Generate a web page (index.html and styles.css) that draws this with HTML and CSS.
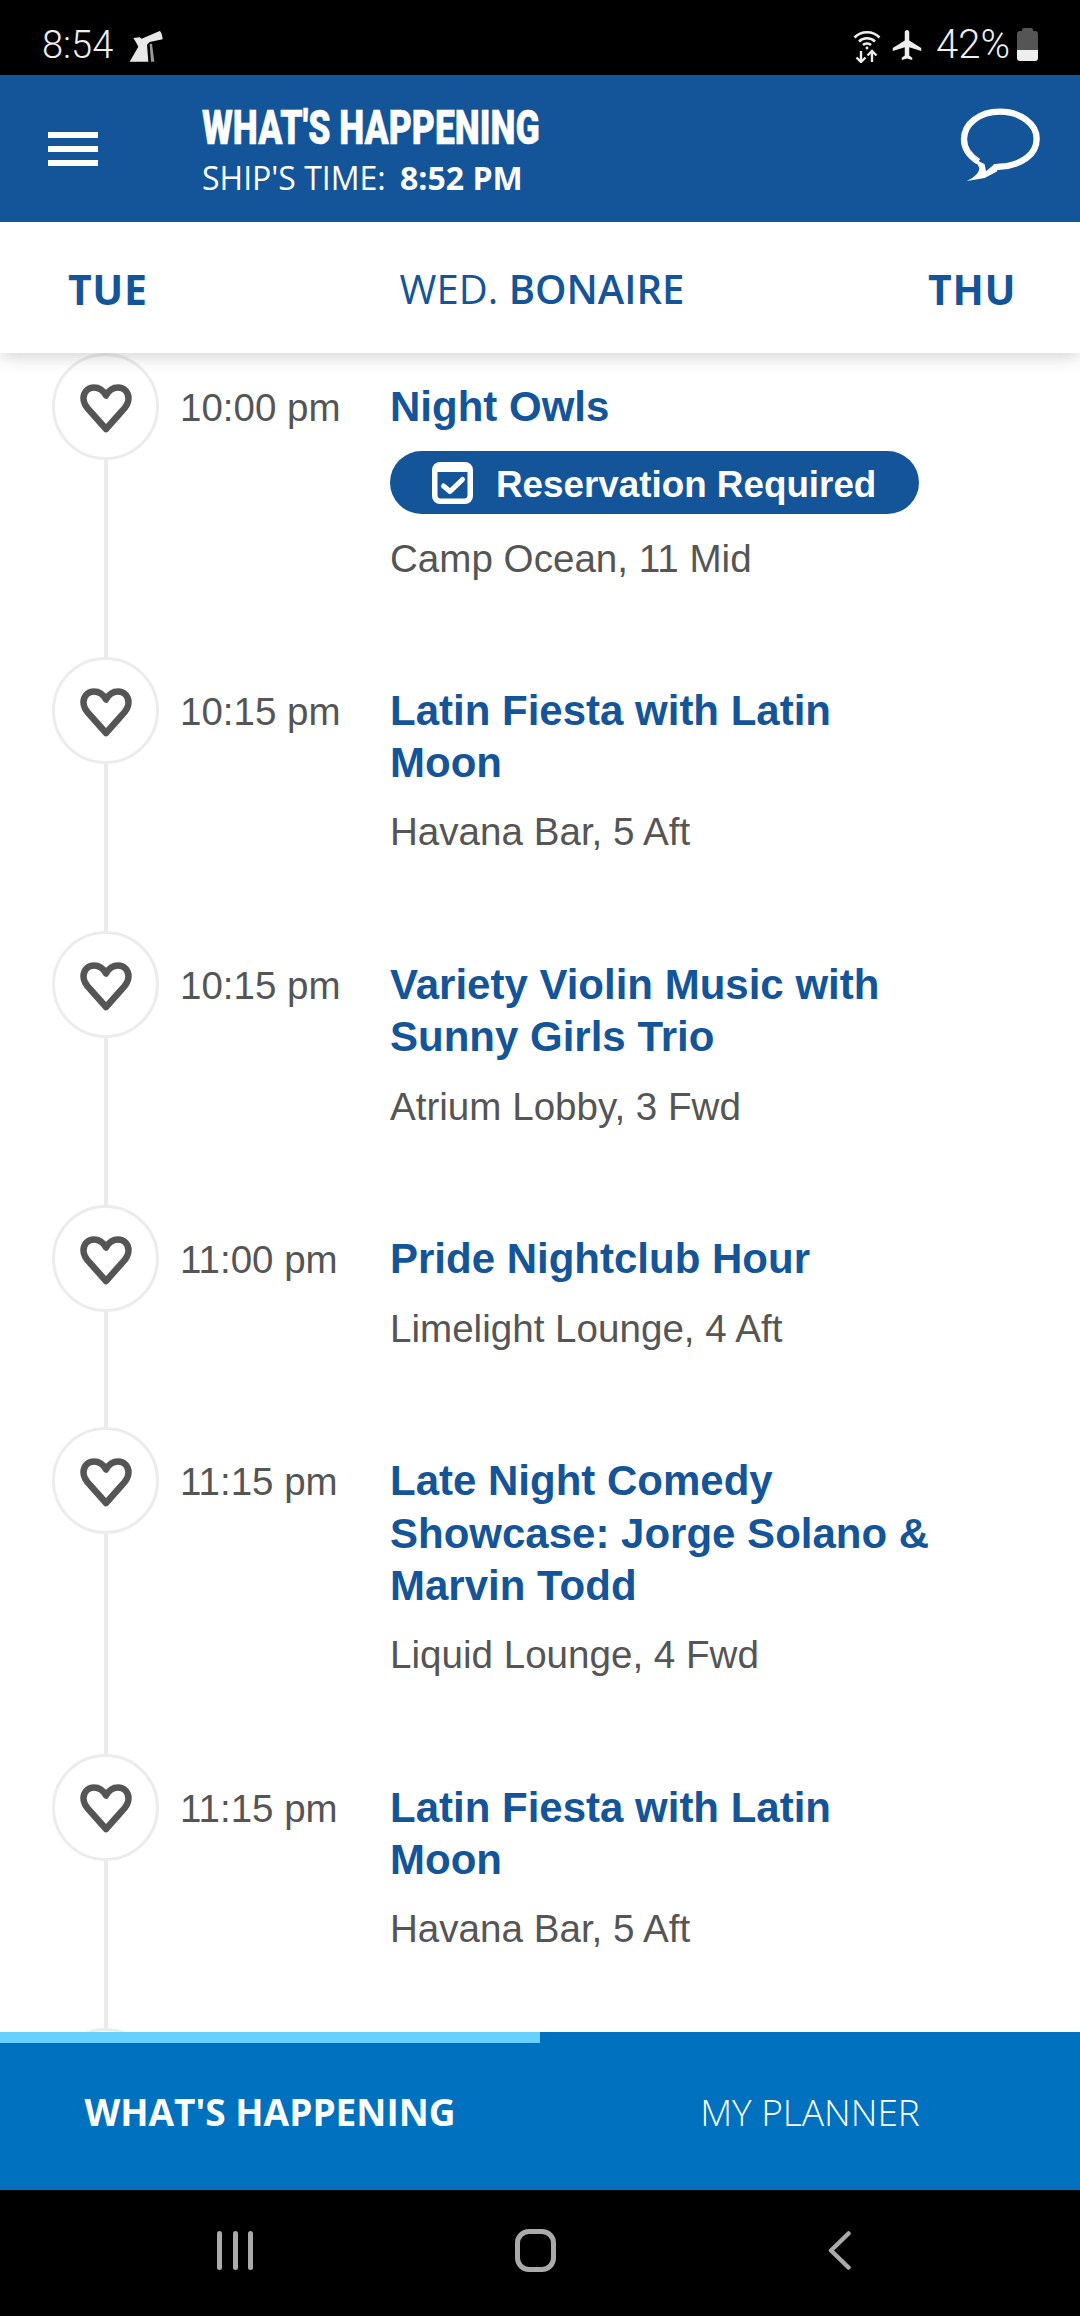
FILE: index.html
```html
<!DOCTYPE html>
<html lang="en">
<head>
<meta charset="utf-8">
<title>What's Happening</title>
<link rel="stylesheet" href="styles.css">
</head>
<body>
<div class="app">
  <div class="status">
    <div class="status-left">
      <span class="clock">8:54</span>
      <svg class="logo" viewBox="0 0 150 150"><path fill="#e8e8e8" d="M43 54L62 52L68 56L122 33Q128 34 131 58L92 66L84 74L88 125L32 125L58 80Q52 68 43 54Z"/><path fill="#9a9a9a" d="M92 72L99 71L106 125L96 125Z"/></svg>
    </div>
    <div class="status-right">
      <svg class="wifi" viewBox="0 0 28 34" fill="none" stroke="#eee" stroke-width="2.6"><path d="M1.5 8.5C8 1.5 20 1.5 26.5 8.5"/><path d="M6 12.5C10 8.2 18 8.2 22 12.5"/><path d="M10 16C12 14 16 14 18 16"/><circle cx="14" cy="19" r="1.4" fill="#eee" stroke="none"/><path d="M8 22V33M3.5 28.5L8 33L12.5 28.5M19 33V22M14.5 26.500L19 22L23.500 26.500" stroke-width="2.400"/></svg>
      <svg class="plane" viewBox="2 2 19 20"><path fill="#eee" d="M21 16v-2l-8-5V3.500c0-.83-.67-1.500-1.500-1.500S10 2.670 10 3.500V9l-8 5v2l8-2.500V19l-2 1.500V22l3.500-1 3.500 1v-1.500L13 19v-5.500l8 2.500z"/></svg>
      <span class="pct">42%</span>
      <div class="battery"><div class="battery-cap"></div><div class="battery-used"></div><div class="battery-left"></div></div>
    </div>
  </div>

  <header class="topbar">
    <div class="burger"><span></span><span></span><span></span></div>
    <div class="heading">
      <div class="heading-title">WHAT'S HAPPENING</div>
      <div class="heading-sub">SHIP'S TIME: <b>8:52 PM</b></div>
    </div>
    <svg class="chat" viewBox="0 0 300 300"><path fill="none" stroke="#fff" stroke-width="19" d="M85 197C58 180 42 155 42 130C42 82 90 47 150 47C212 47 260 85 260 128C260 175 215 208 150 212L132 214"/><path fill="#fff" d="M74 188L104 205L108 226L134 204L142 226L104 246L50 255C70 246 88 232 88 216Z"/></svg>
  </header>

  <nav class="days">
    <span class="day">TUE</span>
    <span class="day-current">WED. <b>BONAIRE</b></span>
    <span class="day day-next">THU</span>
  </nav>

  <main class="list">
    <article class="row">
      <div class="rail"><div class="fav"><svg class="heart" viewBox="0 0 52 49"><path d="M26 11.500C23 6 18 3.500 14 3.500C8 3.500 3.500 8 3.500 14.500C3.500 20 7 24 10 27L26 45L42 27C45 24 48.500 20 48.500 14.500C48.500 8 44 3.500 38 3.500C34 3.500 29 6 26 11.500Z"/></svg></div><div class="rail-line"></div></div>
      <div class="time">10:00 pm</div>
      <div class="info info-reserved">
        <h2 class="title">Night Owls</h2>
        <div class="pill">
          <svg class="check" viewBox="0 0 41 42"><path fill="#fff" fill-rule="evenodd" d="M8 0H33A8 8 0 0 1 41 8V34A8 8 0 0 1 33 42H8A8 8 0 0 1 0 34V8A8 8 0 0 1 8 0ZM5.500 10V33A3.500 3.500 0 0 0 9 36.500H32A3.500 3.500 0 0 0 35.500 33V10Z"/><path fill="none" stroke="#fff" stroke-width="5" stroke-linecap="round" stroke-linejoin="round" d="M11.500 24L18 29.500L30.500 17.500"/></svg>
          <span>Reservation Required</span>
        </div>
        <p class="venue">Camp Ocean, 11 Mid</p>
      </div>
    </article>

    <article class="row">
      <div class="rail"><div class="fav"><svg class="heart" viewBox="0 0 52 49"><path d="M26 11.500C23 6 18 3.500 14 3.500C8 3.500 3.500 8 3.500 14.500C3.500 20 7 24 10 27L26 45L42 27C45 24 48.500 20 48.500 14.500C48.500 8 44 3.500 38 3.500C34 3.500 29 6 26 11.500Z"/></svg></div><div class="rail-line"></div></div>
      <div class="time">10:15 pm</div>
      <div class="info">
        <h2 class="title">Latin Fiesta with Latin Moon</h2>
        <p class="venue">Havana Bar, 5 Aft</p>
      </div>
    </article>

    <article class="row">
      <div class="rail"><div class="fav"><svg class="heart" viewBox="0 0 52 49"><path d="M26 11.500C23 6 18 3.500 14 3.500C8 3.500 3.500 8 3.500 14.500C3.500 20 7 24 10 27L26 45L42 27C45 24 48.500 20 48.500 14.500C48.500 8 44 3.500 38 3.500C34 3.500 29 6 26 11.500Z"/></svg></div><div class="rail-line"></div></div>
      <div class="time">10:15 pm</div>
      <div class="info">
        <h2 class="title">Variety Violin Music with Sunny Girls Trio</h2>
        <p class="venue">Atrium Lobby, 3 Fwd</p>
      </div>
    </article>

    <article class="row">
      <div class="rail"><div class="fav"><svg class="heart" viewBox="0 0 52 49"><path d="M26 11.500C23 6 18 3.500 14 3.500C8 3.500 3.500 8 3.500 14.500C3.500 20 7 24 10 27L26 45L42 27C45 24 48.500 20 48.500 14.500C48.500 8 44 3.500 38 3.500C34 3.500 29 6 26 11.500Z"/></svg></div><div class="rail-line"></div></div>
      <div class="time">11:00 pm</div>
      <div class="info">
        <h2 class="title">Pride Nightclub Hour</h2>
        <p class="venue">Limelight Lounge, 4 Aft</p>
      </div>
    </article>

    <article class="row">
      <div class="rail"><div class="fav"><svg class="heart" viewBox="0 0 52 49"><path d="M26 11.500C23 6 18 3.500 14 3.500C8 3.500 3.500 8 3.500 14.500C3.500 20 7 24 10 27L26 45L42 27C45 24 48.500 20 48.500 14.500C48.500 8 44 3.500 38 3.500C34 3.500 29 6 26 11.500Z"/></svg></div><div class="rail-line"></div></div>
      <div class="time">11:15 pm</div>
      <div class="info">
        <h2 class="title">Late Night Comedy Showcase: Jorge Solano &amp; Marvin Todd</h2>
        <p class="venue">Liquid Lounge, 4 Fwd</p>
      </div>
    </article>

    <article class="row">
      <div class="rail"><div class="fav"><svg class="heart" viewBox="0 0 52 49"><path d="M26 11.500C23 6 18 3.500 14 3.500C8 3.500 3.500 8 3.500 14.500C3.500 20 7 24 10 27L26 45L42 27C45 24 48.500 20 48.500 14.500C48.500 8 44 3.500 38 3.500C34 3.500 29 6 26 11.500Z"/></svg></div><div class="rail-line"></div></div>
      <div class="time">11:15 pm</div>
      <div class="info">
        <h2 class="title">Latin Fiesta with Latin Moon</h2>
        <p class="venue">Havana Bar, 5 Aft</p>
      </div>
    </article>

    <article class="row">
      <div class="rail"><div class="fav"></div></div>
    </article>
  </main>

  <div class="tabs">
    <div class="tab tab-active">WHAT'S HAPPENING</div>
    <div class="tab">MY PLANNER</div>
  </div>

  <div class="navbar">
    <div class="recents"><span></span><span></span><span></span></div>
    <div class="home"></div>
    <svg class="back" viewBox="0 0 23 39"><path fill="none" stroke="#aaa" stroke-width="4.500" stroke-linecap="round" stroke-linejoin="round" d="M20.500 2.500L3 19.500L20.500 36.500"/></svg>
  </div>
</div>
</body>
</html>
```
FILE: styles.css
```css
* { box-sizing: border-box; }
html, body { margin: 0; padding: 0; background: #fff; }
.app {
  width: 1080px;
  height: 2316px;
  display: flex;
  flex-direction: column;
  overflow: hidden;
  font-family: "Liberation Sans", Arial, sans-serif;
}

/* status bar */
.status {
  height: 75px;
  flex: none;
  background: #000;
  color: #eee;
  display: flex;
  align-items: center;
  justify-content: space-between;
  padding: 14px 42px 0 42px;
  font-family: Roboto, sans-serif;
  font-weight: 300;
}
.status-left, .status-right { display: flex; align-items: center; }
.clock { font-size: 38px; line-height: 44px; }
.logo { width: 50px; height: 50px; margin-left: 6px; }
.wifi { width: 28px; height: 34px; margin-top: 2px; }
.plane { width: 30px; height: 30px; margin-left: 11px; }
.pct { font-size: 40px; line-height: 44px; margin-left: 14px; }
.battery { width: 21px; height: 33px; margin-left: 7px; display: flex; flex-direction: column; align-items: center; }
.battery-cap { width: 11px; height: 3px; background: #555; border-radius: 2px 2px 0 0; flex: none; }
.battery-used { width: 21px; height: 19px; background: #555; border-radius: 3px 3px 0 0; flex: none; }
.battery-left { width: 21px; height: 11px; background: #eee; border-radius: 0 0 3px 3px; flex: none; }

/* header */
.topbar {
  height: 147px;
  flex: none;
  background: #14559a;
  color: #fff;
  display: flex;
  align-items: center;
  padding-left: 48px;
  padding-right: 30px;
  position: relative;
  z-index: 3;
}
.burger { width: 50px; height: 34px; display: flex; flex-direction: column; justify-content: space-between; flex: none; }
.burger span { display: block; height: 6px; background: #fff; }
.heading { margin-left: 104px; flex: 1; min-width: 0; padding-top: 5px; }
.heading-title {
  font-family: Roboto, sans-serif;
  font-weight: 900;
  font-size: 48px;
  line-height: 54px;
  white-space: nowrap;
  -webkit-text-stroke: .5px #fff;
  transform: scaleX(.74);
  transform-origin: left center;
}
.heading-sub {
  font-family: "Open Sans", sans-serif;
  font-size: 32px;
  line-height: 46px;
  white-space: pre;
  font-weight: 400;
}
.heading-sub b { font-weight: 700; font-size: 32px; margin-left: 6px; }
.chat { width: 100px; height: 100px; margin-top: -5px; flex: none; }

/* day selector */
.days {
  height: 131px;
  flex: none;
  background: #fff;
  display: grid;
  grid-template-columns: 1fr auto 1fr;
  align-items: center;
  padding: 2px 64px 0 68px;
  color: #14559a;
  font-family: "Open Sans", sans-serif;
  font-size: 40px;
  position: relative;
  z-index: 2;
  box-shadow: 0 2px 18px rgba(0,0,0,.2);
}
.day { font-weight: 700; font-size: 41px; letter-spacing: .6px; }
.day-next { justify-self: end; }
.day-current b { font-weight: 600; }

/* list */
.list { flex: 1; min-height: 0; overflow: hidden; background: #fff; }
.row { display: flex; padding-left: 52px; }
.rail { width: 107px; flex: none; display: flex; flex-direction: column; align-items: center; }
.fav {
  width: 107px;
  height: 107px;
  flex: none;
  border: 3px solid #ececec;
  border-radius: 50%;
  background: #fff;
  display: flex;
  align-items: center;
  justify-content: center;
  padding-top: 3px;
}
.heart { width: 52px; height: 49px; fill: none; stroke: #555; stroke-width: 6.500; stroke-linejoin: round; }
.rail-line { width: 4px; flex: 1; background: #ebebeb; }
.time {
  width: 210px;
  margin-left: 21px;
  flex: none;
  padding-top: 28px;
  color: #555;
  font-size: 38.500px;
  line-height: 53px;
}
.info { width: 560px; padding: 28px 0 72.800px; }
.info-reserved { padding-bottom: 71.800px; }
.title { margin: 0; color: #14559a; font-size: 42px; line-height: 52.200px; font-weight: 700; }
.pill {
  margin-top: 18px;
  height: 63px;
  width: 529px;
  border-radius: 32px;
  background: #14559a;
  color: #fff;
  display: flex;
  align-items: center;
  padding-left: 42px;
  font-size: 36.800px;
  font-weight: 700;
}
.pill span { padding-top: 4px; }
.check { width: 41px; height: 42px; flex: none; margin-right: 23px; }
.venue { margin: 16px 0 0; color: #555; font-size: 38.600px; line-height: 53px; }
.pill + .venue { margin-top: 18px; }

/* tabs */
.tabs { height: 158px; flex: none; display: flex; background: #0071bf; color: #fff; position: relative; z-index: 1; }
.tab {
  flex: 1;
  border-top: 11px solid #0071bf;
  display: flex;
  align-items: center;
  justify-content: center;
  padding-bottom: 10px;
  font-family: "Open Sans", sans-serif;
  font-size: 37px;
  font-weight: 300;
}
.tab-active { font-weight: 700; border-top-color: #66d0ff; }

/* android nav */
.navbar {
  height: 126px;
  flex: none;
  background: #000;
  display: flex;
  align-items: center;
  padding: 0 0 6px 217px;
}
.recents { width: 36px; height: 39px; display: flex; justify-content: space-between; }
.recents span { width: 5px; background: #aaa; border-radius: 3px; }
.home { width: 41px; height: 43px; margin-left: 262px; border: 5px solid #aaa; border-radius: 14px; }
.back { width: 23px; height: 39px; margin-left: 272px; }
```
